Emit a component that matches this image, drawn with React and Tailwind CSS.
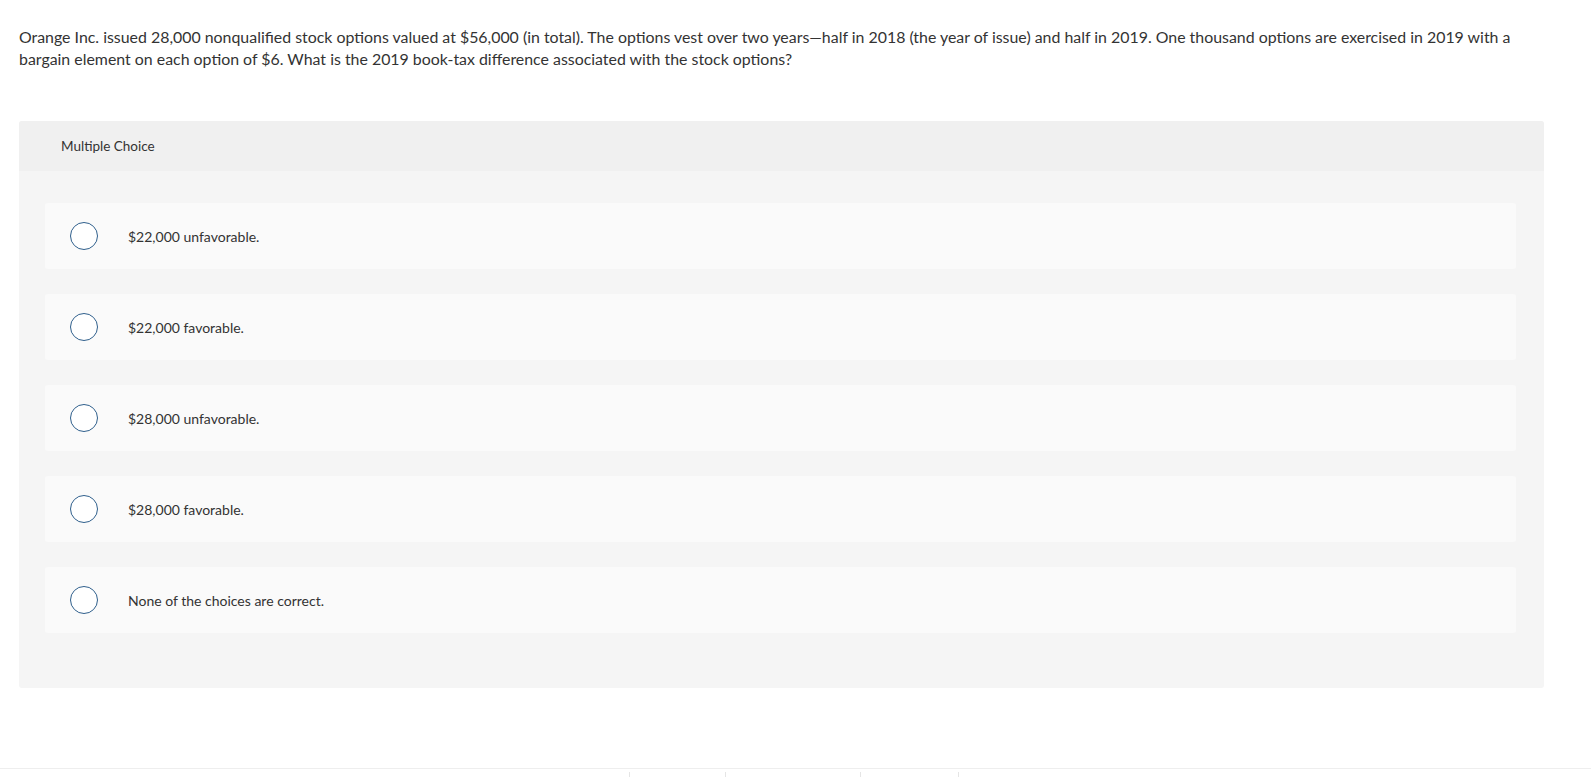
import React from "react";

const options = [
  "$22,000 unfavorable.",
  "$22,000 favorable.",
  "$28,000 unfavorable.",
  "$28,000 favorable.",
  "None of the choices are correct.",
];

export default function App() {
  return (
    <div className="w-[1591px] h-[778px] bg-white text-[#333333] font-['Lato','Liberation_Sans',sans-serif] flex flex-col overflow-hidden">
      <div className="pl-[19px] pt-[26px]">
        <p className="max-w-[1530px] text-[15.9px] leading-[21.6px]">
          Orange Inc. issued 28,000 nonqualified stock options valued at $56,000 (in total). The options vest over two years—half in 2018 (the year of issue) and half in 2019. One thousand options are exercised in 2019 with a bargain element on each option of $6. What is the 2019 book-tax difference associated with the stock options?
        </p>
      </div>
      <div className="mt-[52px] ml-[19px] w-[1525px] rounded-[3px] bg-[#f5f5f5] overflow-hidden">
        <div className="h-[50px] bg-[#f0f0f0] flex items-center pl-[42px] text-[13.5px]">
          Multiple Choice
        </div>
        <div className="flex flex-col gap-[25px] pt-[32px] pb-[55px] pl-[26px] pr-[28px]">
          {options.map((o) => (
            <div key={o} className="h-[66px] rounded-[3px] bg-[#fafafa] flex items-center pl-[25px]">
              <span className="w-[28px] h-[28px] rounded-full border-[1.5px] border-[#2f5f8c] bg-white shrink-0" />
              <span className="ml-[30px] text-[14px]">{o}</span>
            </div>
          ))}
        </div>
      </div>
      <div className="mt-auto mb-[9px] relative border-t border-[#eeeeee] h-[1px]">
        <span className="absolute top-[3px] left-[629px] w-px h-[5px] bg-[#e5e5e5]" />
        <span className="absolute top-[3px] left-[725px] w-px h-[5px] bg-[#e5e5e5]" />
        <span className="absolute top-[3px] left-[860px] w-px h-[5px] bg-[#e5e5e5]" />
        <span className="absolute top-[3px] left-[958px] w-px h-[5px] bg-[#e5e5e5]" />
      </div>
    </div>
  );
}
